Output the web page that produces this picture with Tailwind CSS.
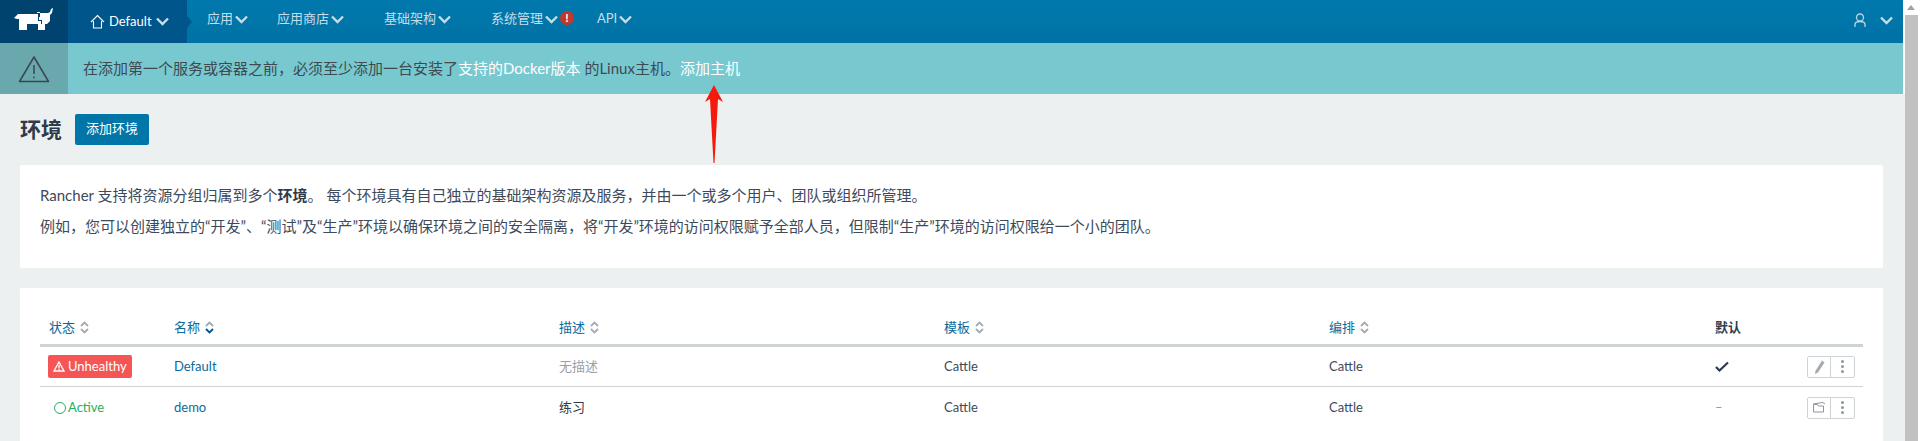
<!DOCTYPE html>
<html lang="zh">
<head>
  <meta charset="UTF-8" />
  <title>环境</title>
  <script src="https://cdn.jsdelivr.net/npm/@tailwindcss/browser@4"></script>
</head>
<body class="bg-white h-[441px] overflow-hidden font-['Lato','Noto_Sans_CJK_SC',sans-serif] text-[13px] text-[#3d4a5c]">
<div class="relative flex h-[441px] overflow-hidden">

  <div class="w-[1905px] shrink-0">
    <!-- top nav -->
    <nav class="w-[1903px] h-[43px] flex bg-gradient-to-b from-[#0079ad] to-[#0072a5] text-[#c5dde8]">
      <div class="w-[68px] flex items-center justify-center bg-[#00436f]">
        <svg width="68" height="43" viewBox="0 0 68 43" fill="#fff">
          <path d="M14 18l4-4h20v7h3v3h4v6h-7v-6H27v6h-8V19h-2z"/>
          <path d="M37 13h11l2-1 1-3 2-1-1 5-2 2v6l-3 3h-5v-4h-3v-3h1v-5h-3z"/>
        </svg>
      </div>
      <div class="relative w-[119px] flex items-center pl-[22px] gap-[4px] bg-[#00558b] text-white text-[13px]">
        <svg width="15" height="15" viewBox="0 0 15 15" fill="none" stroke="#fff" stroke-width="1.1"><path d="M1 8l6.5-6.5L14 8M3.5 7v7h8V7"/></svg>
        <span>Default</span>
        <svg width="13" height="9" viewBox="0 0 13 9" fill="none" stroke="#c9dfe9" stroke-width="2.4"><path d="M1 1.5l5.500 5.500 5.500-5.500"/></svg>
        <div class="absolute left-full top-[16px] w-0 h-0 border-y-[6px] border-y-transparent border-l-[5px] border-l-[#00558b]"></div>
      </div>
      <div class="flex items-center pl-[20px] pb-[5px]">
        <div class="w-[70px] flex items-center gap-[2px]"><span>应用</span><svg width="13" height="9" viewBox="0 0 13 9" fill="none" stroke="#c5dde8" stroke-width="2.400"><path d="M1 1.500l5.500 5.500 5.500-5.500"/></svg></div>
        <div class="w-[107px] flex items-center gap-[2px]"><span>应用商店</span><svg width="13" height="9" viewBox="0 0 13 9" fill="none" stroke="#c5dde8" stroke-width="2.400"><path d="M1 1.500l5.500 5.500 5.500-5.500"/></svg></div>
        <div class="w-[107px] flex items-center gap-[2px]"><span>基础架构</span><svg width="13" height="9" viewBox="0 0 13 9" fill="none" stroke="#c5dde8" stroke-width="2.400"><path d="M1 1.500l5.500 5.500 5.500-5.500"/></svg></div>
        <div class="w-[106px] flex items-center gap-[2px]">
          <span>系统管理</span><svg width="13" height="9" viewBox="0 0 13 9" fill="none" stroke="#c5dde8" stroke-width="2.400"><path d="M1 1.500l5.500 5.500 5.500-5.500"/></svg>
          <span class="w-[14px] h-[14px] -mt-[3px] rounded-full bg-[#c0392b] text-white font-bold text-[12px] leading-[14px] text-center">!</span>
        </div>
        <div class="flex items-center gap-[2px]"><span>API</span><svg width="13" height="9" viewBox="0 0 13 9" fill="none" stroke="#c5dde8" stroke-width="2.400"><path d="M1 1.500l5.500 5.500 5.500-5.500"/></svg></div>
      </div>
      <div class="ml-auto flex items-center pr-[10px] gap-[14px] pb-[3px]">
        <svg width="12" height="14" viewBox="0 0 12 14" fill="none" stroke="#b9d5e2" stroke-width="1.300"><circle cx="6" cy="4.500" r="3.500"/><path d="M1 14v-2.500c0-2 2-3 5-3s5 1 5 3V14"/></svg>
        <svg width="13" height="9" viewBox="0 0 13 9" fill="none" stroke="#c5dde8" stroke-width="2.400"><path d="M1 1.500l5.500 5.500 5.500-5.500"/></svg>
      </div>
    </nav>

    <!-- alert -->
    <div class="w-[1903px] h-[51px] flex items-center bg-[#78c8cf] text-[15px] text-[#3f4a50]">
      <div class="w-[68px] h-full flex items-center justify-center bg-[#69a8ad]">
        <svg width="32" height="28" viewBox="0 0 32 28" fill="none" stroke="#3c4650" stroke-width="1.500" stroke-linejoin="round"><path d="M16 2L30.500 26.500H1.500z"/><path d="M16 10v9M16 21.500v1.800"/></svg>
      </div>
      <p class="pl-[15px]">在添加第一个服务或容器之前，必须至少添加一台安装了<span class="text-white">支持的Docker版本</span> 的Linux主机。<span class="text-white">添加主机</span></p>
    </div>

    <main class="bg-[#ecf0f1] h-[347px] px-[20px] pr-[22px]">
      <div class="h-[71px] flex items-center gap-[13px] pb-[1px]">
        <h1 class="text-[21px] font-bold text-[#2f3b4a]">环境</h1>
        <button class="h-[31px] w-[74px] bg-[#0075a8] text-white rounded-[2px]">添加环境</button>
      </div>

      <section class="bg-white rounded-[2px] h-[103px] px-[20px] pt-[15px] text-[15px] leading-[31px]">
        <p>Rancher 支持将资源分组归属到多个<b class="text-[#2f3b4a]">环境</b>。 每个环境具有自己独立的基础架构资源及服务，并由一个或多个用户、团队或组织所管理。</p>
        <p>例如，您可以创建独立的“开发”、“测试”及“生产”环境以确保环境之间的安全隔离，将“开发”环境的访问权限赋予全部人员，但限制“生产”环境的访问权限给一个小的团队。</p>
      </section>

      <section class="bg-white rounded-[2px] mt-[20px] h-[160px] px-[20px] pt-[23px]">
        <div class="grid grid-cols-[125px_385px_385px_385px_386px_1fr] h-[36px] items-center border-b-[3px] border-[#ced3d6] text-[#0a6a9a]">
          <div class="pl-[9px] flex items-center gap-[5px]">状态 <svg width="9" height="13" viewBox="0 0 9 13" fill="none" stroke="#a4abb2" stroke-width="1.800"><path d="M1 5l3.500-3.500L8 5M1 8l3.500 3.500L8 8"/></svg></div>
          <div class="pl-[9px] flex items-center gap-[5px]">名称 <svg width="9" height="13" viewBox="0 0 9 13" fill="none" stroke-width="1.800"><path stroke="#a4abb2" d="M1 5l3.500-3.500L8 5"/><path stroke="#00558b" d="M1 8l3.500 3.500L8 8"/></svg></div>
          <div class="pl-[9px] flex items-center gap-[5px]">描述 <svg width="9" height="13" viewBox="0 0 9 13" fill="none" stroke="#a4abb2" stroke-width="1.800"><path d="M1 5l3.500-3.500L8 5M1 8l3.500 3.500L8 8"/></svg></div>
          <div class="pl-[9px] flex items-center gap-[5px]">模板 <svg width="9" height="13" viewBox="0 0 9 13" fill="none" stroke="#a4abb2" stroke-width="1.800"><path d="M1 5l3.500-3.500L8 5M1 8l3.500 3.500L8 8"/></svg></div>
          <div class="pl-[9px] flex items-center gap-[5px]">编排 <svg width="9" height="13" viewBox="0 0 9 13" fill="none" stroke="#a4abb2" stroke-width="1.800"><path d="M1 5l3.500-3.500L8 5M1 8l3.500 3.500L8 8"/></svg></div>
          <div class="pl-[9px] font-bold text-[#2f3b4a]">默认</div>
        </div>

        <div class="grid grid-cols-[125px_385px_385px_385px_386px_1fr] h-[40px] items-center border-b border-[#ced3d6]">
          <div class="pl-[8px]">
            <span class="w-[84px] h-[23px] flex items-center gap-[3px] pl-[5px] rounded-[2px] bg-[#f55555] text-white text-[13px]">
              <svg width="12" height="11" viewBox="0 0 12 11" fill="none" stroke="#fff" stroke-width="1.300"><path d="M6 1l5 9H1zM6 4v3.500M6 8.300v1"/></svg>Unhealthy
            </span>
          </div>
          <div class="pl-[9px] text-[#0a6a9a]">Default</div>
          <div class="pl-[9px] text-[#9aa0a6]">无描述</div>
          <div class="pl-[9px]">Cattle</div>
          <div class="pl-[9px]">Cattle</div>
          <div class="flex items-center justify-between pl-[9px] pr-[8px]">
            <svg width="14" height="11" viewBox="0 0 14 11" fill="none" stroke="#2f3b4a" stroke-width="2.200"><path d="M1 6l3.500 3.500L13 1.500"/></svg>
            <div class="flex h-[22px] w-[48px] border border-[#ced3d6] rounded-[2px]">
              <span class="w-[23px] flex items-center justify-center border-r border-[#ced3d6]">
                <svg width="11" height="14" viewBox="0 0 11 14" fill="#a4abb2"><path d="M8 .5l2.500 2L4 12.500 1 14l.5-3.300z"/></svg>
              </span>
              <span class="flex-1 flex flex-col items-center justify-center gap-[2px]"><i class="w-[3px] h-[3px] rounded-full bg-[#8f969d]"></i><i class="w-[3px] h-[3px] rounded-full bg-[#8f969d]"></i><i class="w-[3px] h-[3px] rounded-full bg-[#8f969d]"></i></span>
            </div>
          </div>
        </div>

        <div class="grid grid-cols-[125px_385px_385px_385px_386px_1fr] h-[41px] items-center">
          <div class="pl-[13px] flex items-center gap-[1px] text-[#27ae60] text-[13px]">
            <svg width="14" height="14" viewBox="0 0 14 14" fill="none" stroke="#27ae60"><circle cx="7" cy="7" r="5.500"/></svg>Active
          </div>
          <div class="pl-[9px] text-[#0a6a9a]">demo</div>
          <div class="pl-[9px] text-[#2f3b4a]">练习</div>
          <div class="pl-[9px]">Cattle</div>
          <div class="pl-[9px]">Cattle</div>
          <div class="flex items-center justify-between pl-[9px] pr-[8px]">
            <span class="text-[#8f969d]">–</span>
            <div class="flex h-[22px] w-[48px] border border-[#ced3d6] rounded-[2px]">
              <span class="w-[23px] flex items-center justify-center border-r border-[#ced3d6]">
                <svg width="14" height="11" viewBox="0 0 14 11" fill="none" stroke="#8f969d"><path d="M1.500 10V2.500h4l1 1.500h5v6zM1 2l10-1.500 2 1.500"/></svg>
              </span>
              <span class="flex-1 flex flex-col items-center justify-center gap-[2px]"><i class="w-[3px] h-[3px] rounded-full bg-[#8f969d]"></i><i class="w-[3px] h-[3px] rounded-full bg-[#8f969d]"></i><i class="w-[3px] h-[3px] rounded-full bg-[#8f969d]"></i></span>
            </div>
          </div>
        </div>
      </section>
    </main>
  </div>

  <!-- browser scrollbar -->
  <div class="w-[15px] shrink-0 flex flex-col">
    <div class="h-[15px] flex items-center pl-[2px]"><div class="w-0 h-0 border-x-[4px] border-x-transparent border-b-[5px] border-b-[#a3a3a3]"></div></div>
    <div class="w-[13px] flex-1 bg-[#c1c1c1]"></div>
  </div>

  <!-- annotation arrow -->
  <svg class="absolute left-[705px] top-[84px]" width="18" height="80" viewBox="0 0 18 80" fill="#f41a0d">
    <path d="M9 1l9 17-5-3-3.500 64h-1L5 15l-5 3z"/>
  </svg>
</div>
</body>
</html>
